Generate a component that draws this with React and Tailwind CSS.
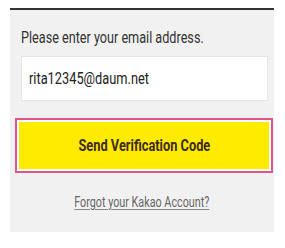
export default function App() {
  return (
    <div className="h-[248px] w-[285px] bg-white font-['Roboto',sans-serif]">
      <div className="h-[8px]" />
      <div className="ml-[10px] w-[264px] h-[224px] border-t-2 border-[#333] bg-[#f1f1f1]">
        <p className="pt-[18px] pl-[11px] text-[16px] leading-[20px] text-[#333] whitespace-nowrap">
          <span className="inline-block origin-left scale-x-[0.79]">Please enter your email address.</span>
        </p>
        <div className="mt-[8px] ml-[11px] w-[247px] h-[45px] border border-[#e6e6e6] bg-white flex items-center pl-[7px] text-[16px] text-[#222] whitespace-nowrap">
          <span className="inline-block origin-left scale-x-[0.8]">rita12345@daum.net</span>
        </div>
        <div className="mt-[17px] ml-[5px] w-[258px] h-[55px] border-2 border-[#e0558d] bg-white p-[2px]">
          <button className="w-full h-full bg-[#ffeb00] flex items-center justify-center text-[16px] font-bold text-[#3c2a1e] whitespace-nowrap">
            <span className="inline-block scale-x-[0.8]">Send Verification Code</span>
          </button>
        </div>
        <div className="mt-[19px] flex justify-center">
          <a href="#" className="text-[14px] text-[#666] whitespace-nowrap">
            <span className="inline-block scale-x-[0.77] underline underline-offset-2 decoration-[#888]">Forgot your Kakao Account?</span>
          </a>
        </div>
      </div>
    </div>
  );
}
